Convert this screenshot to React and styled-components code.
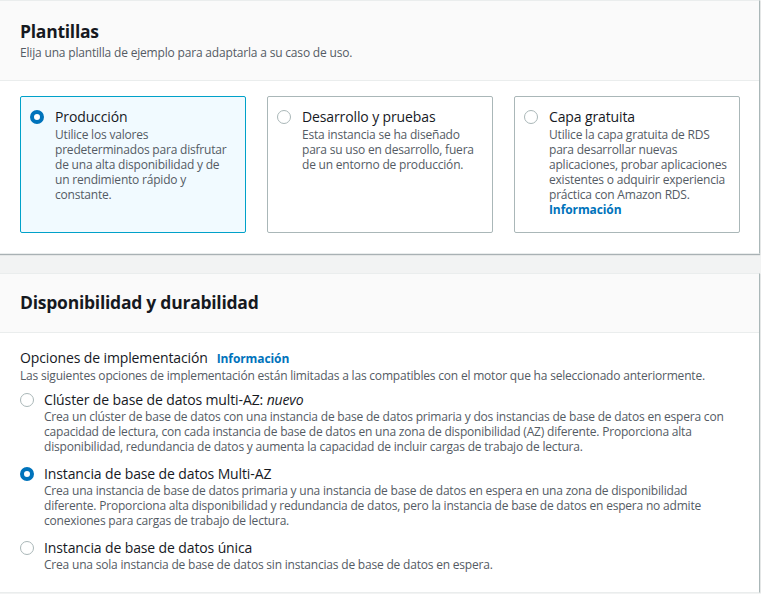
import React from "react";
import styled, { createGlobalStyle } from "styled-components";

const Global = createGlobalStyle`
  html, body { margin: 0; padding: 0; background: #f2f3f3; }
  body { font-family: "Open Sans", "Noto Sans", Arial, sans-serif; color: #16191f; }
  * { box-sizing: border-box; }
`;

const Page = styled.div`
  width: 760px;
  display: flex;
  flex-direction: column;
  gap: 19px;
`;

const Panel = styled.section`
  background: #fff;
  border: 1px solid #eaeded;
  border-left: 0;
  border-right-color: #aab7b8;
  box-shadow: 0 1px 1px 0 rgba(0, 28, 36, 0.3);
`;

const Header = styled.header`
  background: #fafafa;
  border-bottom: 1px solid #eaeded;
  padding: ${(p) => p.$pad || "19px 20px 19px"};
`;

const Title = styled.h2`
  margin: 0;
  font-size: 17.5px;
  font-weight: 700;
  line-height: 22px;
  letter-spacing: -0.25px;
  color: #16191f;
`;

const Subtitle = styled.p`
  margin: 3px 0 0;
  font-size: 12px;
  line-height: 16px;
  letter-spacing: -0.18px;
  color: #545b64;
`;

const Body = styled.div`
  padding: ${(p) => p.$pad || "15px 20px 20px"};
`;

const Cards = styled.div`
  display: grid;
  grid-template-columns: repeat(3, 226px);
  column-gap: 21px;
`;

const Card = styled.label`
  display: flex;
  gap: 11px;
  height: 137px;
  padding: 10px 10px 10px 9px;
  border: 1px solid ${(p) => (p.$selected ? "#00a1c9" : "#aab7b8")};
  background: ${(p) => (p.$selected ? "#f1faff" : "#fff")};
  border-radius: 2px;
`;

const Radio = styled.span`
  flex: none;
  width: 14px;
  height: 14px;
  margin-top: ${(p) => p.$mt || "3px"};
  border-radius: 50%;
  border: ${(p) => (p.$checked ? "4px solid #0073bb" : "1px solid #aab7b8")};
  background: #fff;
`;

const OptText = styled.div`
  display: flex;
  flex-direction: column;
  min-width: 0;
`;

const OptTitle = styled.span`
  font-size: 14px;
  line-height: ${(p) => p.$lh || "18px"};
  letter-spacing: -0.12px;
  color: #16191f;
  em { font-style: italic; }
`;

const OptDesc = styled.span`
  font-size: 12px;
  line-height: 15px;
  letter-spacing: -0.2px;
  color: #545b64;
`;

const Info = styled.a`
  font-size: 12px;
  font-weight: 700;
  color: #0073bb;
  text-decoration: none;
  line-height: 15px;
  letter-spacing: -0.1px;
`;

const FieldLabel = styled.div`
  display: flex;
  align-items: baseline;
  gap: 9px;
  font-size: 14px;
  line-height: 18px;
  letter-spacing: -0.12px;
  color: #16191f;
`;

const FieldDesc = styled.div`
  font-size: 12px;
  line-height: 15px;
  letter-spacing: -0.2px;
  color: #545b64;
  margin-top: 1px;
`;

const OptionList = styled.div`
  display: flex;
  flex-direction: column;
  gap: 11px;
  margin-top: 8px;
`;

const Option = styled.label`
  display: flex;
  gap: 10px;
`;

const templates = [
  {
    title: "Producción",
    desc: "Utilice los valores predeterminados para disfrutar de una alta disponibilidad y de un rendimiento rápido y constante.",
    selected: true,
  },
  {
    title: "Desarrollo y pruebas",
    desc: "Esta instancia se ha diseñado para su uso en desarrollo, fuera de un entorno de producción.",
  },
  {
    title: "Capa gratuita",
    desc: "Utilice la capa gratuita de RDS para desarrollar nuevas aplicaciones, probar aplicaciones existentes o adquirir experiencia práctica con Amazon RDS.",
    info: true,
  },
];

const options = [
  {
    title: (
      <>
        Clúster de base de datos multi-AZ: <em>nuevo</em>
      </>
    ),
    desc: "Crea un clúster de base de datos con una instancia de base de datos primaria y dos instancias de base de datos en espera con capacidad de lectura, con cada instancia de base de datos en una zona de disponibilidad (AZ) diferente. Proporciona alta disponibilidad, redundancia de datos y aumenta la capacidad de incluir cargas de trabajo de lectura.",
  },
  {
    title: "Instancia de base de datos Multi-AZ",
    desc: "Crea una instancia de base de datos primaria y una instancia de base de datos en espera en una zona de disponibilidad diferente. Proporciona alta disponibilidad y redundancia de datos, pero la instancia de base de datos en espera no admite conexiones para cargas de trabajo de lectura.",
    checked: true,
  },
  {
    title: "Instancia de base de datos única",
    desc: "Crea una sola instancia de base de datos sin instancias de base de datos en espera.",
  },
];

export default function App() {
  return (
    <>
      <Global />
      <Page>
        <Panel>
          <Header>
            <Title>Plantillas</Title>
            <Subtitle>Elija una plantilla de ejemplo para adaptarla a su caso de uso.</Subtitle>
          </Header>
          <Body>
            <Cards>
              {templates.map((t) => (
                <Card key={t.title} $selected={t.selected}>
                  <Radio $checked={t.selected} />
                  <OptText>
                    <OptTitle $lh="20px">{t.title}</OptTitle>
                    <OptDesc>{t.desc}</OptDesc>
                    {t.info && <Info href="#">Información</Info>}
                  </OptText>
                </Card>
              ))}
            </Cards>
          </Body>
        </Panel>
        <Panel>
          <Header $pad="17px 20px 19px">
            <Title>Disponibilidad y durabilidad</Title>
          </Header>
          <Body $pad="16px 20px 20px">
            <FieldLabel>
              Opciones de implementación <Info href="#">Información</Info>
            </FieldLabel>
            <FieldDesc>
              Las siguientes opciones de implementación están limitadas a las compatibles con el motor que ha seleccionado anteriormente.
            </FieldDesc>
            <OptionList>
              {options.map((o, i) => (
                <Option key={i}>
                  <Radio $checked={o.checked} $mt="2px" />
                  <OptText>
                    <OptTitle>{o.title}</OptTitle>
                    <OptDesc>{o.desc}</OptDesc>
                  </OptText>
                </Option>
              ))}
            </OptionList>
          </Body>
        </Panel>
      </Page>
    </>
  );
}
